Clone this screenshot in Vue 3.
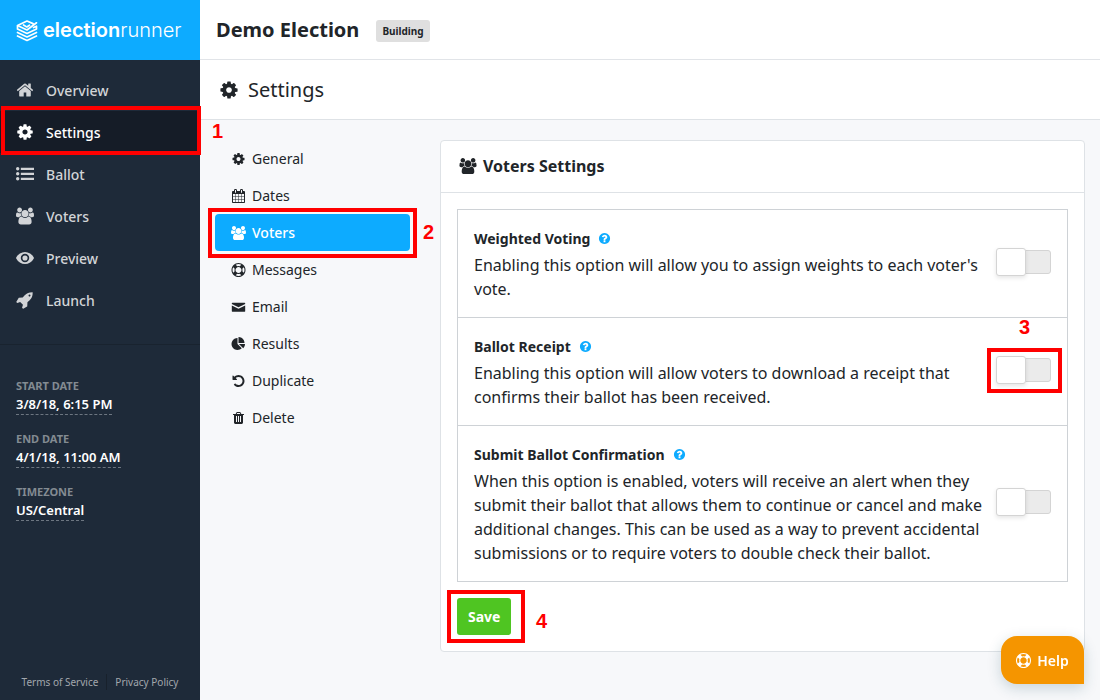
<script setup>
import { ref } from 'vue'

const icons = {
  home: { box: '0 0 1792 1792', d: 'M1472 992v480q0 26-19 45t-45 19h-384v-384h-256v384h-384q-26 0-45-19t-19-45v-480q0-1 .5-3t.5-3l575-474 575 474q1 2 1 6zm223-69l-62 74q-8 9-21 11h-3q-13 0-21-7l-692-577-692 577q-12 8-24 7-13-2-21-11l-62-74q-8-10-7-23.5t11-21.5l719-599q32-26 76-26t76 26l244 204v-195q0-14 9-23t23-9h192q14 0 23 9t9 23v408l219 182q10 8 11 21.5t-7 23.5z' },
  cog: { box: '0 0 1792 1792', d: 'M1152 896q0-106-75-181t-181-75-181 75-75 181 75 181 181 75 181-75 75-181zm512-109v222q0 12-8 23t-20 13l-185 28q-19 54-39 91 35 50 107 138 10 12 10 25t-9 23q-27 37-99 108t-94 71q-12 0-26-9l-138-108q-44 23-91 38-16 136-29 186-7 28-36 28h-222q-14 0-24.5-8.5t-11.5-21.5l-28-184q-49-16-90-37l-141 107q-10 9-25 9-14 0-25-11-126-114-165-168-7-10-7-23 0-12 8-23 15-21 51-66.5t54-70.5q-27-50-41-99l-183-27q-13-2-21-12.5t-8-23.5v-222q0-12 8-23t19-13l186-28q14-46 39-92-40-57-107-138-10-12-10-24 0-10 9-23 26-36 98.5-107.5t94.5-71.5q13 0 26 10l138 107q44-23 91-38 16-136 29-186 7-28 36-28h222q14 0 24.5 8.5t11.5 21.5l28 184q49 16 90 37l142-107q9-9 24-9 13 0 25 10 129 119 165 170 7 8 7 22 0 12-8 23-15 21-51 66.5t-54 70.5q26 50 41 98l183 28q13 2 21 12.5t8 23.5z' },
  list: { box: '0 0 1792 1792', d: 'M170 210a170 170 0 1 0 0 340a170 170 0 1 0 0-340zM170 706a170 170 0 1 0 0 340a170 170 0 1 0 0-340zM170 1202a170 170 0 1 0 0 340a170 170 0 1 0 0-340zM480 270h1312v220h-1312zM480 766h1312v220h-1312zM480 1262h1312v220h-1312z' },
  users: { box: '0 0 1920 1792', d: 'M593 896q-162 5-265 128h-134q-82 0-138-40.5t-56-118.5q0-353 124-353 6 0 43.5 21t97.5 42.5 119 21.5q67 0 133-23-5 37-5 66 0 139 81 256zm1071 637q0 120-73 189.5t-194 69.5h-874q-121 0-194-69.5t-73-189.5q0-53 3.5-103.5t14-109 26.5-108.5 43-97.5 62-81 85.5-53.5 111.5-20q10 0 43 21.5t73 48 107 48 135 21.5 135-21.5 107-48 73-48 43-21.5q61 0 111.5 20t85.5 53.5 62 81 43 97.5 26.5 108.5 14 109 3.5 103.5zm-1024-1277q0 106-75 181t-181 75-181-75-75-181 75-181 181-75 181 75 75 181zm704 384q0 159-112.5 271.5t-271.5 112.5-271.5-112.5-112.5-271.5 112.5-271.5 271.5-112.5 271.5 112.5 112.5 271.5zm576 225q0 78-56 118.5t-138 40.5h-134q-103-123-265-128 81-117 81-256 0-29-5-66 66 23 133 23 59 0 119-21.5t97.5-42.5 43.5-21q124 0 124 353zm-128-609q0 106-75 181t-181 75-181-75-75-181 75-181 181-75 181 75 75 181z' },
  eye: { box: '0 0 1792 1792', d: 'M896 300q270 0 510 150t366 400q20 46 0 92q-126 250-366 400t-510 150t-510-150t-366-400q-20-46 0-92q126-250 366-400t510-150zM896 476a420 420 0 1 0 0 840a420 420 0 1 0 0-840zM896 640a256 256 0 1 1 0 512a256 256 0 1 1 0-512z' },
  rocket: { box: '0 0 1792 1792', d: 'M1440 448q0-40-28-68t-68-28-68 28-28 68 28 68 68 28 68-28 28-68zm224-288q0 249-75.5 430.5t-253.5 360.5q-81 80-195 176l-20 379q-2 16-16 26l-384 224q-7 4-16 4-12 0-23-9l-64-64q-13-14-8-32l85-276-281-281-276 85q-3 1-9 1-14 0-23-9l-64-64q-17-19-5-39l224-384q10-14 26-16l379-20q96-114 176-195 188-187 358-258t431-71q14 0 24 9.5t10 22.5z' },
  calendar: { box: '0 0 1792 1792', d: 'M192 1664h288v-288h-288v288zm352 0h320v-288h-320v288zm-352-352h288v-320h-288v320zm352 0h320v-320h-320v320zm-352-384h288v-288h-288v288zm736 736h320v-288h-320v288zm-384-736h320v-288h-320v288zm768 736h288v-288h-288v288zm-384-352h320v-320h-320v320zm-352-864v-288q0-13-9.5-22.5t-22.5-9.5h-64q-13 0-22.5 9.5t-9.5 22.5v288q0 13 9.5 22.5t22.5 9.5h64q13 0 22.5-9.5t9.5-22.5zm736 864h288v-320h-288v320zm-384-384h320v-288h-320v288zm384 0h288v-288h-288v288zm32-480v-288q0-13-9.5-22.5t-22.5-9.5h-64q-13 0-22.5 9.5t-9.5 22.5v288q0 13 9.5 22.5t22.5 9.5h64q13 0 22.5-9.5t9.5-22.5zm384-64v1280q0 52-38 90t-90 38h-1408q-52 0-90-38t-38-90v-1280q0-52 38-90t90-38h128v-96q0-66 47-113t113-47h64q66 0 113 47t47 113v96h384v-96q0-66 47-113t113-47h64q66 0 113 47t47 113v96h128q52 0 90 38t38 90z' },
  ring: { box: '0 0 1792 1792', d: 'M896 0q182 0 348 71t286 191 191 286 71 348-71 348-191 286-286 191-348 71-348-71-286-191-191-286-71-348 71-348 191-286 286-191 348-71zm0 128q-190 0-361 90l194 194q82-28 167-28t167 28l194-194q-171-90-361-90zm-678 1129l194-194q-28-82-28-167t28-167l-194-194q-90 171-90 361t90 361zm678 407q190 0 361-90l-194-194q-82 28-167 28t-167-28l-194 194q171 90 361 90zm0-384q159 0 271.5-112.5t112.5-271.5-112.5-271.5-271.5-112.5-271.5 112.5-112.5 271.5 112.5 271.5 271.5 112.5zm484-217l194 194q90-171 90-361t-90-361l-194 194q28 82 28 167t-28 167z' },
  envelope: { box: '0 0 1792 1792', d: 'M100 340h1592q60 0 60 60v110l-856 430-856-430v-110q0-60 60-60zM40 690l856 430 856-430v750q0 60-60 60h-1592q-60 0-60-60z' },
  pie: { box: '0 0 1792 1792', d: 'M768 890l546 546q-106 108-247.5 168t-298.5 60q-209 0-385.5-103t-279.5-279.5-103-385.5 103-385.5 279.5-279.5 385.5-103v762zm187 6h773q0 157-60 298.5t-168 247.5zm709-128h-768v-768q209 0 385.5 103t279.5 279.5 103 385.5z' },
  undo: { box: '0 0 1792 1792', d: 'M1664 896q0 156-61 298t-164 245-245 164-298 61q-172 0-327-72.5t-264-204.5q-7-10-6.5-22.5t8.5-20.5l137-138q10-9 25-9 16 2 23 12 73 95 179 147t225 52q104 0 198.5-40.5t163.5-109.5 109.5-163.5 40.5-198.5-40.5-198.5-109.5-163.5-163.5-109.5-198.5-40.5q-98 0-188 35.5t-160 101.5l137 138q31 30 14 69-17 40-59 40h-448q-26 0-45-19t-19-45v-448q0-42 40-59 39-17 69 14l130 129q107-101 244.5-156.5t284.5-55.5q156 0 298 61t245 164 164 245 61 298z' },
  trash: { box: '0 0 1792 1792', d: 'M704 1376v-704q0-14-9-23t-23-9h-64q-14 0-23 9t-9 23v704q0 14 9 23t23 9h64q14 0 23-9t9-23zm256 0v-704q0-14-9-23t-23-9h-64q-14 0-23 9t-9 23v704q0 14 9 23t23 9h64q14 0 23-9t9-23zm256 0v-704q0-14-9-23t-23-9h-64q-14 0-23 9t-9 23v704q0 14 9 23t23 9h64q14 0 23-9t9-23zm-544-992h448l-48-117q-7-9-17-11h-317q-10 2-17 11zm928 32v64q0 14-9 23t-23 9h-96v948q0 83-47 143.5t-113 60.5h-832q-66 0-113-58.5t-47-141.5v-952h-96q-14 0-23-9t-9-23v-64q0-14 9-23t23-9h309l70-167q15-37 54-63t79-26h320q40 0 79 26t54 63l70 167h309q14 0 23 9t9 23z' },
  question: { box: '0 0 1792 1792', d: 'M1024 1376v-192q0-14-9-23t-23-9h-192q-14 0-23 9t-9 23v192q0 14 9 23t23 9h192q14 0 23-9t9-23zm256-672q0-88-55.5-163t-138.5-116-170-41q-243 0-371 213-15 24 8 42l132 100q7 6 19 6 16 0 25-12 53-68 86-92 34-24 86-24 48 0 85.5 26t37.5 59q0 38-20 61t-68 45q-63 28-115.5 86.5t-52.5 125.5v36q0 14 9 23t23 9h192q14 0 23-9t9-23q0-19 21.5-49.5t54.5-49.5q32-18 49-28.5t46-35 44.5-48 28-60.5 12.5-81zm384 192q0 209-103 385.5t-279.5 279.5-385.5 103-385.5-103-279.5-279.5-103-385.5 103-385.5 279.5-279.5 385.5-103 385.5 103 279.5 279.5 103 385.5z' },
}

const mainNav = [
  { label: 'Overview', icon: 'home' },
  { label: 'Settings', icon: 'cog', active: true, step: 1 },
  { label: 'Ballot', icon: 'list' },
  { label: 'Voters', icon: 'users' },
  { label: 'Preview', icon: 'eye' },
  { label: 'Launch', icon: 'rocket' },
]

const dates = [
  { label: 'START DATE', value: '3/8/18, 6:15 PM' },
  { label: 'END DATE', value: '4/1/18, 11:00 AM' },
  { label: 'TIMEZONE', value: 'US/Central' },
]

const subNav = [
  { label: 'General', icon: 'cog' },
  { label: 'Dates', icon: 'calendar' },
  { label: 'Voters', icon: 'users', active: true, step: 2 },
  { label: 'Messages', icon: 'ring' },
  { label: 'Email', icon: 'envelope' },
  { label: 'Results', icon: 'pie' },
  { label: 'Duplicate', icon: 'undo' },
  { label: 'Delete', icon: 'trash' },
]

const options = ref([
  { id: 'weighted', title: 'Weighted Voting', on: false, text: "Enabling this option will allow you to assign weights to each voter's vote." },
  { id: 'receipt', title: 'Ballot Receipt', on: false, step: 3, text: 'Enabling this option will allow voters to download a receipt that confirms their ballot has been received.' },
  { id: 'confirm', title: 'Submit Ballot Confirmation', on: false, text: 'When this option is enabled, voters will receive an alert when they submit their ballot that allows them to continue or cancel and make additional changes. This can be used as a way to prevent accidental submissions or to require voters to double check their ballot.' },
])
</script>

<template>
  <div class="app">
    <aside class="sidebar">
      <a href="#" class="brand">
        <svg class="brand-mark" viewBox="0 0 22 22" fill="none" stroke="currentColor" stroke-width="1.7" stroke-linejoin="round" stroke-linecap="round">
          <path d="M17 3.6L11 1L1.5 5.5L11 10L20.5 2.8M7.5 5L10.8 7L13.5 5.2" />
          <path d="M1.5 9L11 13.5L20.5 9V6.2L17.5 7.5M1.5 6V9" />
          <path d="M1.5 12.5L11 17L20.5 12.5" />
          <path d="M1.5 16L11 20.5L20.5 16" />
        </svg>
        <span class="brand-name"><b>election</b><span>runner</span></span>
      </a>
      <nav class="main-nav">
        <a v-for="item in mainNav" :key="item.label" href="#" :class="{ active: item.active }">
          <svg class="icon" :viewBox="icons[item.icon].box"><path :d="icons[item.icon].d" /></svg>
          <span>{{ item.label }}</span>
          <span v-if="item.step" class="mark mark-main"><i>{{ item.step }}</i></span>
        </a>
      </nav>
      <dl class="dates">
        <div v-for="d in dates" :key="d.label">
          <dt>{{ d.label }}</dt>
          <dd><a href="#">{{ d.value }}</a></dd>
        </div>
      </dl>
      <footer class="legal">
        <a href="#">Terms of Service</a>
        <a href="#">Privacy Policy</a>
      </footer>
    </aside>

    <main class="main">
      <header class="topbar">
        <h1>Demo Election</h1>
        <span class="status">Building</span>
      </header>
      <div class="page-title">
        <svg class="icon" :viewBox="icons.cog.box"><path :d="icons.cog.d" /></svg>
        <h2>Settings</h2>
      </div>
      <div class="content">
        <nav class="sub-nav">
          <a v-for="item in subNav" :key="item.label" href="#" :class="{ active: item.active }">
            <svg class="icon" :viewBox="icons[item.icon].box"><path :d="icons[item.icon].d" /></svg>
            <span>{{ item.label }}</span>
            <span v-if="item.step" class="mark mark-sub"><i>{{ item.step }}</i></span>
          </a>
        </nav>
        <form class="card" @submit.prevent>
          <h3>
            <svg class="icon" :viewBox="icons.users.box"><path :d="icons.users.d" /></svg>
            Voters Settings
          </h3>
          <div class="card-body">
            <ul class="options">
              <li v-for="o in options" :key="o.id">
                <div class="option-text">
                  <div class="option-title">
                    <label :for="o.id">{{ o.title }}</label>
                    <svg class="icon" :viewBox="icons.question.box"><path :d="icons.question.d" /></svg>
                  </div>
                  <p>{{ o.text }}</p>
                </div>
                <span class="toggle">
                  <input :id="o.id" v-model="o.on" type="checkbox" />
                  <span v-if="o.step" class="mark mark-toggle"><i>{{ o.step }}</i></span>
                </span>
              </li>
            </ul>
            <div class="actions">
              <button type="submit" class="save">Save</button>
              <span class="mark mark-save"><i>4</i></span>
            </div>
          </div>
        </form>
      </div>
    </main>

    <button type="button" class="help">
      <svg class="icon" :viewBox="icons.ring.box"><path :d="icons.ring.d" /></svg>
      Help
    </button>
  </div>
</template>

<style>
body {
  margin: 0;
  background: #f7f8fa;
}
</style>

<style scoped>
* {
  box-sizing: border-box;
}
.app {
  display: flex;
  min-height: 100vh;
  font-family: "Noto Sans", sans-serif;
  font-size: 14px;
  color: #212529;
  background: #f7f8fa;
}
a {
  color: inherit;
  text-decoration: none;
}
h1, h2, h3, p, ul, dl, dd {
  margin: 0;
  padding: 0;
}
.icon {
  flex: none;
  fill: currentColor;
  fill-rule: evenodd;
  overflow: visible;
}
.sidebar {
  flex: none;
  display: flex;
  flex-direction: column;
  width: 200px;
  background: #1e2a39;
  color: #d2d4d7;
}
.brand {
  display: flex;
  align-items: center;
  gap: 5px;
  height: 60px;
  padding: 2px 16px 0;
  background: #0dabff;
  color: #fff;
}
.brand-mark {
  flex: none;
  width: 22px;
  height: 22px;
}
.brand-name {
  font-family: Inter, sans-serif;
  font-size: 20px;
  line-height: 24px;
  padding-bottom: 2px;
}
.brand-name b {
  font-weight: 600;
}
.brand-name span {
  font-weight: 300;
}
.main-nav {
  padding: 9px 0 23px;
  border-bottom: 1px solid #19232f;
}
.main-nav a {
  position: relative;
  display: flex;
  align-items: center;
  gap: 12px;
  height: 42px;
  padding: 0 16px;
  font-weight: 500;
}
.main-nav a.active {
  background: #151c27;
  color: #fff;
}
.main-nav .icon {
  width: 18px;
  height: 18px;
}
.dates {
  padding: 33px 16px;
}
.dates div {
  height: 53px;
}
.dates dt {
  font-size: 11px;
  font-weight: 700;
  line-height: 16px;
  color: #838b92;
}
.dates dd {
  line-height: 20px;
}
.dates dd a {
  display: inline-block;
  font-size: 13px;
  font-weight: 600;
  line-height: 19px;
  color: #fff;
  border-bottom: 1px dashed #6d7681;
}
.legal {
  display: flex;
  justify-content: center;
  margin-top: auto;
  padding-bottom: 10px;
  font-size: 10px;
  line-height: 16px;
  color: #a2a7ad;
}
.legal a {
  padding: 0 8px;
}
.legal a + a {
  border-left: 1px solid #18212c;
}
.main {
  flex: 1;
  min-width: 0;
}
.topbar {
  display: flex;
  align-items: center;
  gap: 17px;
  height: 60px;
  padding: 0 16px;
  background: #fff;
  border-bottom: 1px solid #e1e4e8;
}
.topbar h1 {
  font-size: 20px;
  font-weight: 700;
  line-height: 28px;
}
.status {
  padding: 0 6px;
  margin-top: 2px;
  border-radius: 3px;
  background: #dfdfdf;
  font-size: 10px;
  font-weight: 700;
  line-height: 22px;
}
.page-title {
  display: flex;
  align-items: center;
  gap: 9px;
  height: 60px;
  padding: 0 19px;
  background: #fff;
  border-bottom: 1px solid #dee2e6;
}
.page-title h2 {
  font-size: 20px;
  font-weight: 400;
  line-height: 28px;
}
.page-title .icon {
  width: 20px;
  height: 20px;
}
.content {
  display: flex;
  align-items: flex-start;
  gap: 30px;
  padding: 20px 15px;
}
.sub-nav {
  flex: none;
  width: 195px;
}
.sub-nav a {
  position: relative;
  display: flex;
  align-items: center;
  gap: 6px;
  height: 37px;
  padding: 0 16px;
  border-radius: 4px;
}
.sub-nav a.active {
  background: #0dabff;
  color: #fff;
  font-weight: 500;
}
.sub-nav .icon {
  width: 15px;
  height: 14px;
}
.card {
  flex: 1;
  min-width: 0;
  background: #fff;
  border: 1px solid #dee2e6;
  border-radius: 4px;
}
.card h3 {
  display: flex;
  align-items: center;
  gap: 6px;
  height: 52px;
  padding: 0 18px 2px;
  border-bottom: 1px solid #dee2e6;
  font-size: 16px;
  font-weight: 700;
}
.card h3 .icon {
  width: 18px;
  height: 16px;
}
.card-body {
  padding: 16px;
}
.options {
  list-style: none;
  border: 1px solid #ced2d6;
}
.options li {
  display: flex;
  align-items: center;
  gap: 12px;
  padding: 16px;
}
.options li + li {
  border-top: 1px solid #ced2d6;
}
.option-text {
  flex: 1;
}
.option-title {
  display: flex;
  align-items: center;
  gap: 8px;
  height: 27px;
  padding-bottom: 2px;
  font-weight: 700;
}
.option-title .icon {
  width: 13px;
  height: 13px;
  color: #0dabff;
}
.options p {
  font-size: 16px;
  line-height: 24px;
}
.toggle {
  position: relative;
  flex: none;
  display: flex;
  width: 55px;
  height: 28px;
  margin-bottom: 3px;
}
.toggle input {
  appearance: none;
  position: relative;
  width: 55px;
  height: 24px;
  margin: 2px 0;
  border: 1px solid #d4d4d4;
  border-radius: 3px;
  background: #ebebeb;
}
.toggle input::before {
  content: "";
  position: absolute;
  top: -3px;
  left: -1px;
  width: 30px;
  height: 28px;
  box-sizing: border-box;
  border: 1px solid #d4d4d4;
  border-radius: 3px;
  background: #fff;
  box-shadow: 0 2px 4px rgba(0, 0, 0, 0.1);
}
.toggle input:checked {
  background: #4fc522;
}
.toggle input:checked::before {
  left: 24px;
}
.actions {
  position: relative;
  display: flex;
  padding-top: 16px;
}
.save {
  height: 37px;
  padding: 0 11px;
  border: 0;
  border-radius: 3px;
  background: #4fc522;
  color: #fff;
  font: 700 14px "Noto Sans", sans-serif;
}
.help {
  position: fixed;
  right: 16px;
  bottom: 16px;
  display: flex;
  align-items: center;
  justify-content: center;
  gap: 6px;
  width: 83px;
  height: 48px;
  padding: 0;
  border: 0;
  border-radius: 16px 16px 0 16px;
  background: #f59500;
  color: #fff;
  font: 600 14px "Noto Sans", sans-serif;
  box-shadow: 0 4px 14px rgba(30, 80, 100, 0.22);
}
.help .icon {
  width: 15px;
  height: 15px;
}
/* Numbered step callouts laid over the controls they point at */
.mark {
  position: absolute;
  z-index: 2;
  border: 4px solid #f00;
  pointer-events: none;
}
.mark i {
  position: absolute;
  font: bold 20px/20px "Liberation Sans", sans-serif;
  color: #f00;
}
.mark-main {
  inset: -5px -1px -2px 1px;
}
.mark-main i {
  left: 207px;
  top: 11px;
}
.mark-sub {
  inset: -6px -7px -7px;
}
.mark-sub i {
  left: 211px;
  top: 10px;
}
.mark-toggle {
  inset: -8px -11px -9px -9px;
}
.mark-toggle i {
  left: 28px;
  top: -35px;
}
.mark-save {
  left: -10px;
  top: 8px;
  width: 78px;
  height: 53px;
}
.mark-save i {
  left: 85px;
  top: 17px;
}
</style>
